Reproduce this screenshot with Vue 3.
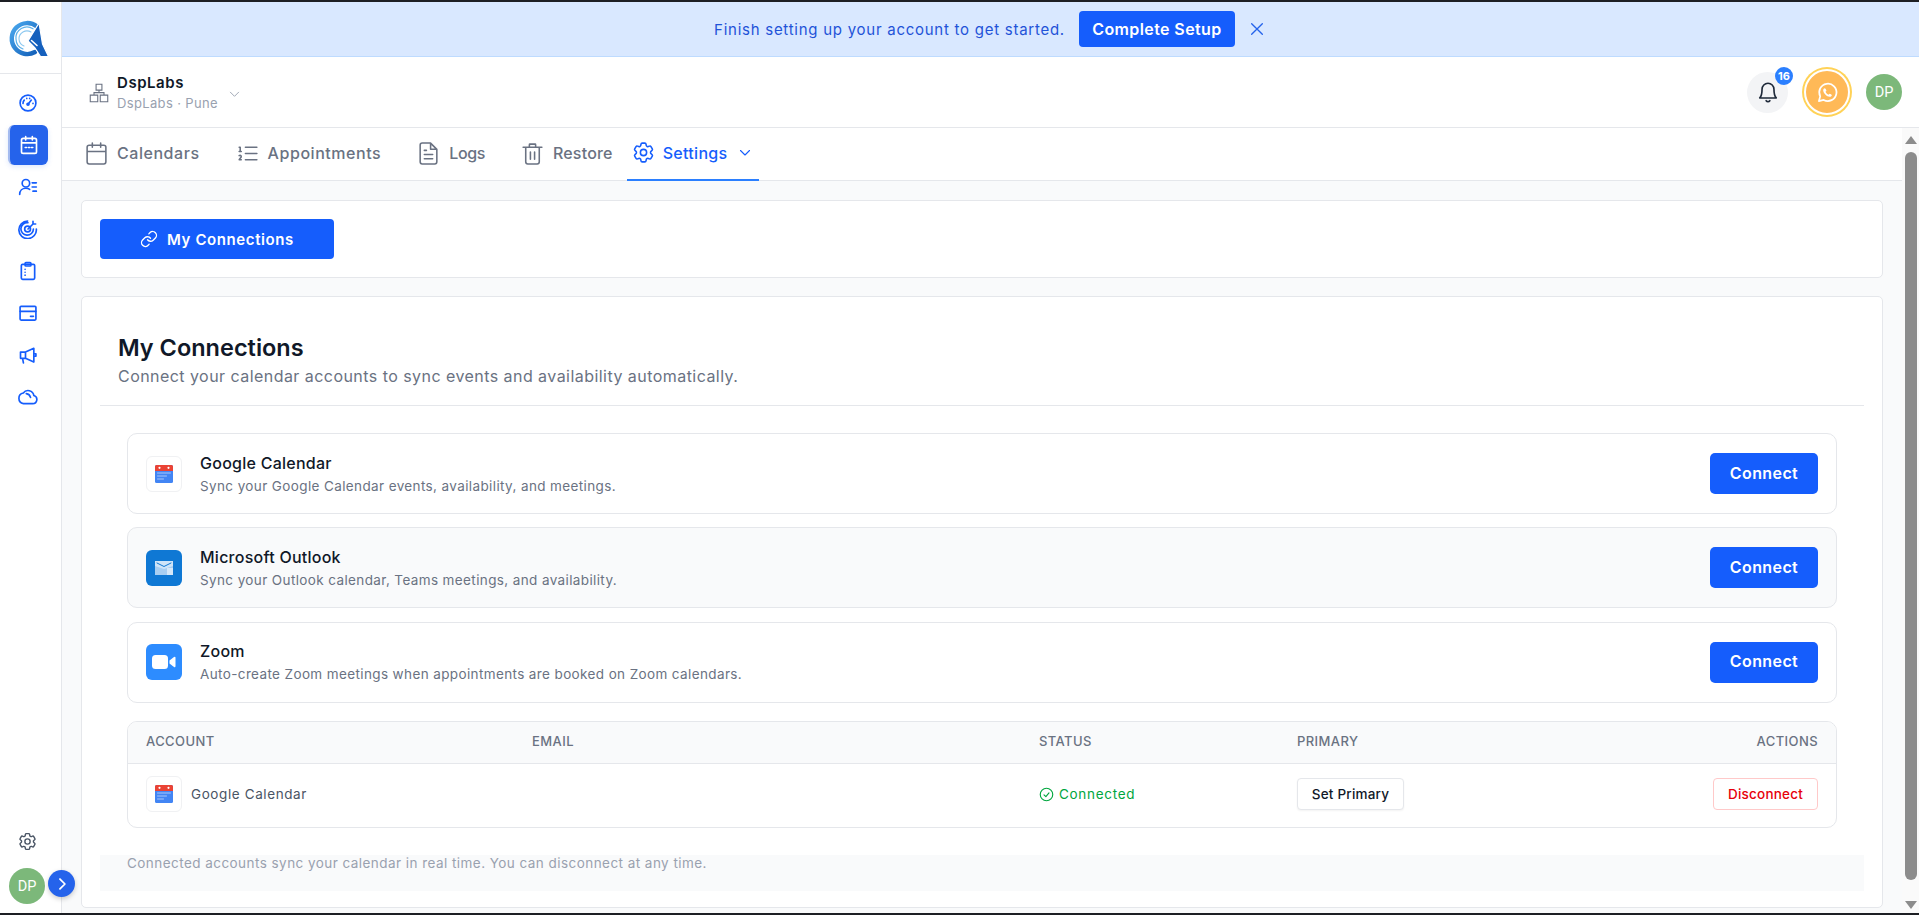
<script setup>
const tabs = [
  { label: 'Calendars', icon: 'calendar', pad: 'tab-wide' },
  { label: 'Appointments', icon: 'list', pad: 'tab-wide' },
  { label: 'Logs', icon: 'doc', pad: 'tab-wide tab-logs' },
  { label: 'Restore', icon: 'trash', pad: 'tab-narrow' },
]
const connections = [
  { id: 'google', title: 'Google Calendar', desc: 'Sync your Google Calendar events, availability, and meetings.', alt: false },
  { id: 'outlook', title: 'Microsoft Outlook', desc: 'Sync your Outlook calendar, Teams meetings, and availability.', alt: true },
  { id: 'zoom', title: 'Zoom', desc: 'Auto-create Zoom meetings when appointments are booked on Zoom calendars.', alt: false },
]
const gear = 'M9.594 3.94c.09-.542.56-.94 1.11-.94h2.593c.55 0 1.02.398 1.11.94l.213 1.281c.063.374.313.686.645.87.074.04.147.083.22.127.325.196.72.257 1.075.124l1.217-.456a1.125 1.125 0 0 1 1.37.49l1.296 2.247a1.125 1.125 0 0 1-.26 1.431l-1.003.827c-.293.241-.438.613-.43.992a7.723 7.723 0 0 1 0 .255c-.008.378.137.75.43.991l1.004.827c.424.35.534.955.26 1.43l-1.298 2.247a1.125 1.125 0 0 1-1.369.491l-1.217-.456c-.355-.133-.75-.072-1.076.124a6.47 6.47 0 0 1-.22.128c-.331.183-.581.495-.644.869l-.213 1.281c-.09.543-.56.94-1.11.94h-2.594c-.55 0-1.019-.398-1.11-.94l-.213-1.281c-.062-.374-.312-.686-.644-.87a6.52 6.52 0 0 1-.22-.127c-.325-.196-.72-.257-1.076-.124l-1.217.456a1.125 1.125 0 0 1-1.369-.49l-1.297-2.247a1.125 1.125 0 0 1 .26-1.431l1.004-.827c.292-.24.437-.613.43-.991a6.932 6.932 0 0 1 0-.255c.007-.38-.138-.751-.43-.992l-1.004-.827a1.125 1.125 0 0 1-.26-1.43l1.297-2.247a1.125 1.125 0 0 1 1.37-.491l1.216.456c.356.133.751.072 1.076-.124.072-.044.146-.086.22-.128.332-.183.582-.495.644-.869l.214-1.28ZM15 12a3 3 0 1 1-6 0 3 3 0 0 1 6 0Z'
const tabPaths = {
  calendar: 'M5 4h14a2 2 0 0 1 2 2v14a2 2 0 0 1-2 2H5a2 2 0 0 1-2-2V6a2 2 0 0 1 2-2zM16 2v4M8 2v4M3 10h18',
  list: 'M10 6h11M10 12h11M10 18h11M4 6h1v4M4 10h2M6 18H4c0-1 2-2 2-3s-1-1.5-2-1',
  doc: 'M14 2H6a2 2 0 0 0-2 2v16a2 2 0 0 0 2 2h12a2 2 0 0 0 2-2V8zM14 2v6h6M8 13h8M8 17h8M8 9h2',
  trash: 'M3 6h18M9 6V3.5a.5.5 0 0 1 .5-.5h5a.5.5 0 0 1 .5.5V6M5.5 6v14a2 2 0 0 0 2 2h9a2 2 0 0 0 2-2V6M10 10.5v7M14 10.5v7',
}
</script>

<template>
  <div class="app">
    <aside class="sidebar">
      <div class="logo-box">
        <svg class="logo" viewBox="0 0 40 38" fill="none">
          <defs>
            <linearGradient id="ringGrad" x1="0" y1="0" x2="1" y2="1">
              <stop offset="0" stop-color="#4aa8ee" />
              <stop offset="1" stop-color="#125fb8" />
            </linearGradient>
          </defs>
          <path d="M28 6.500A15.500 15.500 0 1 0 26 32" stroke="url(#ringGrad)" stroke-width="4.400" />
          <path d="M24 8.800A11 11 0 0 0 7 19a11 11 0 0 0 7 10" stroke="#5fb2ea" stroke-width="1.200" />
          <path d="M22 12A8 8 0 0 0 10 19a8 8 0 0 0 5 7" stroke="#8cc8f0" stroke-width="1.100" />
          <path d="M30 3 19 21l7 7 5.500 8.500H39.500L33.500 24z" fill="#1560bd" stroke="#fff" stroke-width="1.200" />
          <path d="M22.500 20.500 28 25.500" stroke="#fff" stroke-width="1.600" />
        </svg>
      </div>
      <nav class="side-nav">
        <span class="side-item">
          <svg viewBox="0 0 24 24" class="side-icon"><circle cx="12" cy="12" r="9.500" /><path d="M12 13.500 16 8.500M6 12.500a6 6 0 0 1 1.500-4M10.500 6.500h.01M14 6.500h.01M18 12.500h.01" /><circle cx="12" cy="13.500" r="1.200" /></svg>
        </span>
        <span class="side-item side-active">
          <svg viewBox="0 0 24 24" class="side-icon"><path d="M5 4h14a2 2 0 0 1 2 2v14a2 2 0 0 1-2 2H5a2 2 0 0 1-2-2V6a2 2 0 0 1 2-2zM16 2v4M8 2v4M3 9.500h18M7.500 15h1.500M11.300 15h1.500M15 15h1.500" /></svg>
        </span>
        <span class="side-item">
          <svg viewBox="0 0 24 24" class="side-icon"><circle cx="9.500" cy="7.500" r="4.500" /><path d="M2 21c0-4.500 3.300-7.500 7.500-7.500 1.800 0 3.300.5 4.500 1.400M17 7h5M17 12h5M18 17h4" /></svg>
        </span>
        <span class="side-item">
          <svg viewBox="0 0 24 24" class="side-icon"><path d="M18 11a7.500 7.500 0 1 1-6.500-7.500M21.500 11A10.500 10.500 0 1 1 11 1.500" transform="translate(.5 1)" /><circle cx="11.500" cy="12" r="3.500" /><path d="M12 12l6-6M18 6V2.800M18 6h3.200" /></svg>
        </span>
        <span class="side-item">
          <svg viewBox="0 0 24 24" class="side-icon"><rect x="4" y="4" width="16" height="18" rx="1.500" /><rect x="8.500" y="2" width="7" height="4" rx="1" /><path d="M8.500 10h.01M8.500 13.500h.01M8.500 17h.01" /></svg>
        </span>
        <span class="side-item">
          <svg viewBox="0 0 24 24" class="side-icon"><rect x="2.500" y="4" width="19" height="16.500" rx="1.200" /><path d="M2.500 10h19M15 16h3.500" /></svg>
        </span>
        <span class="side-item">
          <svg viewBox="0 0 24 24" class="side-icon"><path d="M3 8.500h6V16H3zM9 8.500 19 4v16.500L9 16M5.500 16l1 5.500M19 10.500h2.500v3H19" /></svg>
        </span>
        <span class="side-item">
          <svg viewBox="0 0 24 24" class="side-icon"><path d="M6.500 20h11a5 5 0 0 0 1.500-9.800 7 7 0 0 0-12.600-3A6.500 6.500 0 0 0 6.500 20zM10 8a6 6 0 0 1 5 4.500" /></svg>
        </span>
      </nav>
      <div class="side-bottom">
        <svg viewBox="0 0 24 24" class="side-gear"><path :d="gear" /></svg>
        <span class="avatar side-avatar">DP</span>
      </div>
      <button class="expand">
        <svg viewBox="0 0 24 24"><path d="M8.500 3.500 17 12l-8.500 8.500" /></svg>
      </button>
    </aside>

    <div class="main">
      <div class="banner">
        <span class="banner-text">Finish setting up your account to get started.</span>
        <button class="banner-btn">Complete Setup</button>
        <svg viewBox="0 0 24 24" class="banner-close"><path d="M4 4l16 16M20 4 4 20" /></svg>
      </div>

      <header class="header">
        <div class="org">
          <svg viewBox="0 0 24 24" class="org-icon"><path d="M8.500 1.500h7v7h-7zM1.500 14.500h9v8h-9zM13.500 14.500h9v8h-9zM12 8.500v3M6 14.500v-3h12v3" /></svg>
          <div class="org-text">
            <div class="org-name">DspLabs</div>
            <div class="org-sub">DspLabs · Pune</div>
          </div>
          <svg viewBox="0 0 24 24" class="org-chev"><path d="M3 7l9 9 9-9" /></svg>
        </div>
        <div class="head-right">
          <span class="bell">
            <svg viewBox="0 0 24 24"><path d="M12 2.500a6.500 6.500 0 0 0-6.500 6.500c0 5-1 8-2.500 9.500h18c-1.500-1.500-2.500-4.500-2.500-9.500A6.500 6.500 0 0 0 12 2.500zM10 21.500a2.500 2.500 0 0 0 4 0" /></svg>
            <span class="badge">16</span>
          </span>
          <span class="wa">
            <svg viewBox="0 0 24 24"><path class="wa-ring" d="M3 21l1.400-5A9 9 0 1 1 8 19.700z" /><path class="wa-phone" d="M9 7.500c-.6 0-1.500.8-1.500 2.200 0 3 3.700 6.800 6.800 6.800 1.400 0 2.200-.9 2.200-1.600 0-.5-1.800-1.500-2.300-1.500-.4 0-.8.900-1.200.9-.9 0-3-2-3-3 0-.4.900-.8.900-1.200 0-.5-1-2.600-1.900-2.600z" /></svg>
          </span>
          <span class="avatar head-avatar">DP</span>
        </div>
      </header>

      <div class="body-row">
        <div class="page">
          <nav class="tabs">
            <div v-for="t in tabs" :key="t.label" class="tab" :class="t.pad">
              <svg viewBox="0 0 24 24" class="tab-icon"><path :d="tabPaths[t.icon]" /></svg>
              <span>{{ t.label }}</span>
            </div>
            <div class="tab tab-active">
              <svg viewBox="0 0 24 24" class="tab-icon"><path :d="gear" /></svg>
              <span>Settings</span>
              <svg viewBox="0 0 24 24" class="tab-chev"><path d="M3 7l9 9 9-9" /></svg>
            </div>
          </nav>

          <div class="content">
            <section class="panel panel-top">
              <button class="primary-wide">
                <svg viewBox="0 0 24 24"><path d="M10 13a5 5 0 0 0 7.540.540l3-3a5 5 0 0 0-7.070-7.070l-1.720 1.710" /><path d="M14 11a5 5 0 0 0-7.540-.540l-3 3a5 5 0 0 0 7.070 7.070l1.710-1.710" /></svg>
                My Connections
              </button>
            </section>

            <section class="panel panel-main">
              <div class="intro">
                <h1>My Connections</h1>
                <p>Connect your calendar accounts to sync events and availability automatically.</p>
              </div>

              <div class="conn-list">
                <div v-for="c in connections" :key="c.id" class="conn" :class="{ 'conn-alt': c.alt }">
                  <span v-if="c.id === 'google'" class="app-icon app-google">
                    <svg viewBox="0 0 18 18"><rect y="0" width="18" height="18" rx="1.500" fill="#4285f4" /><path d="M0 1.500A1.500 1.500 0 0 1 1.500 0h15A1.500 1.500 0 0 1 18 1.500V6H0z" fill="#ea4335" /><circle cx="4.500" cy="2.800" r="1.100" fill="#fff" /><circle cx="13.500" cy="2.800" r="1.100" fill="#fff" /><path d="M2.500 8h13M2.500 11h9M2.500 14h6" stroke="#a9c7fa" stroke-width="1" /></svg>
                  </span>
                  <span v-else-if="c.id === 'outlook'" class="app-icon app-outlook">
                    <svg viewBox="0 0 18 14"><rect width="18" height="14" fill="#a8cef2" /><rect x="12" y="7" width="6" height="7" fill="#d6e8f9" /><path d="M0 0h18v5L9 8 0 5z" fill="#cfe4f8" /><path d="M2 2l7 3.500 7-3.500" fill="none" stroke="#0f78d4" stroke-width="1" /></svg>
                  </span>
                  <span v-else class="app-icon app-zoom">
                    <svg viewBox="0 0 24 14"><rect width="16" height="14" rx="3.500" fill="#fff" /><path d="M17.500 5.500 22 2a1 1 0 0 1 1.500.8v8.400a1 1 0 0 1-1.500.8L17.500 8.500z" fill="#fff" /></svg>
                  </span>
                  <div class="conn-text">
                    <div class="conn-title">{{ c.title }}</div>
                    <div class="conn-desc">{{ c.desc }}</div>
                  </div>
                  <button class="connect">Connect</button>
                </div>
              </div>

              <div class="table">
                <div class="t-row t-head">
                  <span>ACCOUNT</span>
                  <span>EMAIL</span>
                  <span>STATUS</span>
                  <span>PRIMARY</span>
                  <span class="t-end">ACTIONS</span>
                </div>
                <div class="t-row t-data">
                  <span class="t-account">
                    <span class="app-icon app-google">
                      <svg viewBox="0 0 18 18"><rect y="0" width="18" height="18" rx="1.500" fill="#4285f4" /><path d="M0 1.500A1.500 1.500 0 0 1 1.500 0h15A1.500 1.500 0 0 1 18 1.500V6H0z" fill="#ea4335" /><circle cx="4.500" cy="2.800" r="1.100" fill="#fff" /><circle cx="13.500" cy="2.800" r="1.100" fill="#fff" /><path d="M2.500 8h13M2.500 11h9M2.500 14h6" stroke="#a9c7fa" stroke-width="1" /></svg>
                    </span>
                    Google Calendar
                  </span>
                  <span></span>
                  <span class="t-status">
                    <svg viewBox="0 0 24 24"><circle cx="12" cy="12" r="10" /><path d="M8 12.500l3 3 5-6" /></svg>
                    Connected
                  </span>
                  <span><button class="mini mini-plain">Set Primary</button></span>
                  <span class="t-end"><button class="mini mini-danger">Disconnect</button></span>
                </div>
              </div>

              <div class="note">Connected accounts sync your calendar in real time. You can disconnect at any time.</div>
            </section>
          </div>
        </div>

        <div class="scrollbar">
          <span class="arrow-up"></span>
          <span class="thumb"></span>
          <span class="arrow-down"></span>
        </div>
      </div>
    </div>
  </div>
</template>

<style scoped>
.app {
  display: flex;
  height: 915px;
  box-sizing: border-box;
  border-top: 2px solid #1d1f24;
  border-bottom: 2px solid #1d1f24;
  overflow: hidden;
  background: #fff;
  font-family: Inter, "Open Sans", sans-serif;
  color: #101828;
}
button { font-family: inherit; border: 0; cursor: pointer; }
svg { display: block; fill: none; stroke-linecap: round; stroke-linejoin: round; }

.sidebar {
  width: 62px;
  flex: none;
  box-sizing: border-box;
  border-right: 1px solid #e5e7eb;
  display: flex;
  flex-direction: column;
  position: relative;
  z-index: 2;
}
.logo-box {
  height: 72px;
  flex: none;
  border-bottom: 1px solid #e5e7eb;
  display: flex;
  justify-content: center;
  align-items: center;
  box-sizing: border-box;
}
.logo { width: 40px; height: 38px; margin-left: -4px; margin-top: 2px; }
.side-nav {
  display: flex;
  flex-direction: column;
  align-items: center;
  gap: 2px;
  padding-top: 9px;
  padding-right: 5px;
}
.side-item {
  width: 40px;
  height: 40px;
  display: flex;
  align-items: center;
  justify-content: center;
  color: #155dfc;
  border-radius: 6px;
}
.side-active {
  background: #2563eb;
  color: #fff;
  box-shadow: 0 2px 5px rgba(37, 99, 235, .15);
  border-left: 2px solid #a4bbef;
  box-sizing: border-box;
}
.side-icon { width: 20px; height: 20px; stroke: currentColor; stroke-width: 2; }
.side-bottom {
  margin-top: auto;
  display: flex;
  flex-direction: column;
  align-items: center;
  gap: 16px;
  padding-bottom: 9px;
  padding-right: 7px;
}
.side-gear { width: 21px; height: 21px; stroke: #4a5565; stroke-width: 1.600; }
.avatar {
  display: inline-flex;
  align-items: center;
  justify-content: center;
  border-radius: 50%;
  background: #7cb87a;
  color: #fff;
  font-size: 14.500px;
  width: 36px;
  height: 36px;
  flex: none;
  font-family: Roboto, sans-serif;
}
.expand {
  position: absolute;
  left: 48px;
  bottom: 16px;
  width: 27px;
  height: 27px;
  border-radius: 50%;
  background: #2563eb;
  display: flex;
  align-items: center;
  justify-content: center;
  padding: 0;
  box-shadow: 0 2px 5px rgba(0, 0, 0, .2);
}
.expand svg { width: 14px; height: 14px; stroke: #fff; stroke-width: 3; }

.main { flex: 1; min-width: 0; display: flex; flex-direction: column; }
.banner {
  height: 55px;
  flex: none;
  box-sizing: border-box;
  background: #d9e8ff;
  border-bottom: 1px solid #bedbff;
  display: flex;
  align-items: center;
  justify-content: center;
  gap: 14px;
}
.banner-text { font-size: 15px; color: #1f53d8; letter-spacing: .74px; }
.banner-btn {
  height: 36px;
  width: 156px;
  background: #155dfc;
  color: #fff;
  border-radius: 4px;
  font-size: 16px;
  font-weight: 600;
  letter-spacing: .4px;
  padding: 0;
}
.banner-close { width: 16px; height: 16px; stroke: #2563eb; stroke-width: 2; margin-right: 2px; }

.header {
  height: 71px;
  flex: none;
  box-sizing: border-box;
  border-bottom: 1px solid #e5e7eb;
  display: flex;
  align-items: center;
  justify-content: space-between;
  padding: 0 17px 0 27px;
}
.org { display: flex; align-items: center; }
.org-icon { width: 20px; height: 20px; stroke: #6a7282; stroke-width: 1.300; stroke-linecap: square; stroke-linejoin: miter; margin-top: 2px; }
.org-text { margin-left: 8px; padding-top: 1px; }
.org-name { font-size: 15px; font-weight: 600; color: #101828; letter-spacing: .55px; line-height: 20px; }
.org-sub { font-size: 13px; color: #99a1af; line-height: 20px; letter-spacing: .35px; }
.org-chev { width: 11px; height: 11px; stroke: #99a1af; stroke-width: 2; margin-left: 11px; margin-top: 4px; }
.head-right { display: flex; align-items: center; }
.bell {
  width: 41px;
  height: 41px;
  border-radius: 50%;
  background: #f3f4f6;
  display: flex;
  align-items: center;
  justify-content: center;
  position: relative;
}
.bell svg { width: 22px; height: 22px; stroke: #1e2939; stroke-width: 1.800; }
.badge {
  position: absolute;
  top: -5px;
  right: -5px;
  width: 18px;
  height: 18px;
  border-radius: 50%;
  background: #2b7fff;
  color: #fff;
  font-size: 11px;
  font-weight: 700;
  display: flex;
  align-items: center;
  justify-content: center;
}
.wa {
  width: 46px;
  height: 46px;
  box-sizing: border-box;
  border-radius: 50%;
  background: #ffb957;
  border: 2px solid #fff;
  box-shadow: 0 0 0 2px #ffd257;
  margin-left: 16px;
  display: flex;
  align-items: center;
  justify-content: center;
}
.wa svg { width: 23px; height: 23px; }
.wa-ring { stroke: #fff; stroke-width: 1.800; }
.wa-phone { fill: #fff; }
.head-avatar { margin-left: 16px; }

.body-row { flex: 1; min-height: 0; display: flex; }
.page { flex: 1; min-width: 0; display: flex; flex-direction: column; background: #f9fafb; }
.tabs {
  height: 53px;
  flex: none;
  box-sizing: border-box;
  background: #fff;
  border-bottom: 1px solid #e5e7eb;
  display: flex;
  padding-left: 22px;
}
.tab {
  display: flex;
  align-items: center;
  gap: 8px;
  font-size: 16px;
  font-weight: 500;
  color: #6a7282;
  letter-spacing: .55px;
  box-sizing: border-box;
  padding-bottom: 2px;
}
.tab-wide { padding-right: 35px; }
.tab-narrow { padding-right: 14px; letter-spacing: .2px; }
.tab-logs { letter-spacing: -.4px; }
.tab-icon { width: 25px; height: 25px; stroke: currentColor; stroke-width: 1.500; flex: none; }
.tab-active {
  color: #155dfc;
  padding: 0 8px 2px 4px;
  height: 53px;
  gap: 7px;
  border-bottom: 2px solid #2b7fff;
  letter-spacing: .3px;
}
.tab-chev { width: 12px; height: 12px; stroke: currentColor; stroke-width: 2.200; margin-left: 4px; }

.content {
  flex: 1;
  min-height: 0;
  display: flex;
  flex-direction: column;
  gap: 18px;
  padding: 19px 19px 0 19px;
}
.panel {
  background: #fff;
  border: 1px solid #e5e7eb;
  border-radius: 5px;
  box-sizing: border-box;
}
.panel-top { height: 78px; flex: none; display: flex; align-items: center; padding-left: 18px; }
.primary-wide {
  width: 234px;
  height: 40px;
  background: #155dfc;
  color: #fff;
  border-radius: 4px;
  font-size: 15px;
  font-weight: 600;
  display: flex;
  align-items: center;
  justify-content: center;
  gap: 9px;
  letter-spacing: .6px;
  padding: 0;
}
.primary-wide svg { width: 18px; height: 18px; stroke: #fff; stroke-width: 1.800; }
.panel-main { height: 612px; flex: none; padding: 0 18px; }
.intro { height: 109px; box-sizing: border-box; border-bottom: 1px solid #e5e7eb; padding: 35px 18px 0; }
.intro h1 { margin: 0; font-size: 23.500px; line-height: 32px; font-weight: 600; color: #101828; }
.intro p { margin: 0; font-size: 16px; line-height: 24px; color: #6a7282; letter-spacing: .45px; }
.conn-list { display: flex; flex-direction: column; gap: 13.400px; padding: 27px 27px 0; }
.conn {
  height: 81px;
  box-sizing: border-box;
  border: 1px solid #e5e7eb;
  border-radius: 10px;
  display: flex;
  align-items: center;
  padding: 0 18px;
  background: #fff;
}
.conn-alt { background: #f9fafb; }
.app-icon {
  width: 36px;
  height: 36px;
  box-sizing: border-box;
  border-radius: 6px;
  display: flex;
  align-items: center;
  justify-content: center;
  flex: none;
}
.app-google { border: 1px solid #f0f1f3; background: #fff; }
.app-google svg { width: 18px; height: 18px; }
.app-outlook { background: #0f78d4; }
.app-outlook svg { width: 18px; height: 14px; }
.app-zoom { background: #2d8cff; }
.app-zoom svg { width: 24px; height: 14px; }
.conn-text { margin-left: 18px; flex: 1; }
.conn-title { font-size: 16px; font-weight: 500; color: #101828; line-height: 22px; letter-spacing: .25px; }
.conn-desc { font-size: 13.500px; color: #6a7282; line-height: 20px; margin-top: 2px; letter-spacing: .38px; }
.connect {
  width: 108px;
  height: 41px;
  background: #155dfc;
  color: #fff;
  border-radius: 5px;
  font-size: 16px;
  font-weight: 600;
  letter-spacing: .4px;
  padding: 0 0 2px;
}
.table {
  margin: 18px 27px 0;
  height: 107px;
  box-sizing: border-box;
  border: 1px solid #e5e7eb;
  border-radius: 10px;
  overflow: hidden;
}
.t-row {
  display: grid;
  grid-template-columns: 386px 507px 258px 1fr 105px;
  align-items: center;
  padding: 0 18px;
}
.t-head {
  height: 42px;
  box-sizing: border-box;
  padding-bottom: 3px;
  background: #f9fafb;
  border-bottom: 1px solid #e5e7eb;
  font-size: 13px;
  font-weight: 500;
  color: #6a7282;
  letter-spacing: .42px;
}
.t-data { height: 63px; box-sizing: border-box; padding-bottom: 2px; }
.t-end { justify-self: end; }
.t-account { display: flex; align-items: center; gap: 9px; font-size: 13.500px; color: #4a5565; letter-spacing: .6px; }
.t-status { display: flex; align-items: center; gap: 5px; font-size: 13.500px; color: #00a63e; letter-spacing: .7px; }
.t-status svg { width: 15px; height: 15px; stroke: currentColor; stroke-width: 1.800; }
.mini {
  height: 32px;
  background: #fff;
  border-radius: 4px;
  font-size: 13.500px;
  font-weight: 500;
  letter-spacing: .2px;
  padding: 0;
}
.mini-plain { width: 107px; border: 1px solid #e5e7eb; color: #101828; box-shadow: 0 1px 2px rgba(0, 0, 0, .05); }
.mini-danger { width: 105px; border: 1px solid #ffc9c9; color: #e7000b; }
.note {
  margin-top: 27px;
  height: 36px;
  background: #f9fafb;
  padding-left: 27px;
  font-size: 13.500px;
  line-height: 16px;
  color: #99a1af;
  letter-spacing: .45px;
}

.scrollbar {
  width: 17px;
  flex: none;
  background: #fafafa;
  display: flex;
  flex-direction: column;
  align-items: center;
}
.arrow-up, .arrow-down {
  width: 0;
  height: 0;
  border-left: 6px solid transparent;
  border-right: 6px solid transparent;
}
.arrow-up { border-bottom: 8px solid #8c8c8c; margin-top: 8px; }
.arrow-down { border-top: 8px solid #8c8c8c; margin-bottom: 4px; }
.thumb { width: 12px; flex: 1; background: #8c8c8c; border-radius: 6px; margin: 8px 0 21px; }
</style>

<style>
html, body { margin: 0; padding: 0; background: #fff; }
</style>
